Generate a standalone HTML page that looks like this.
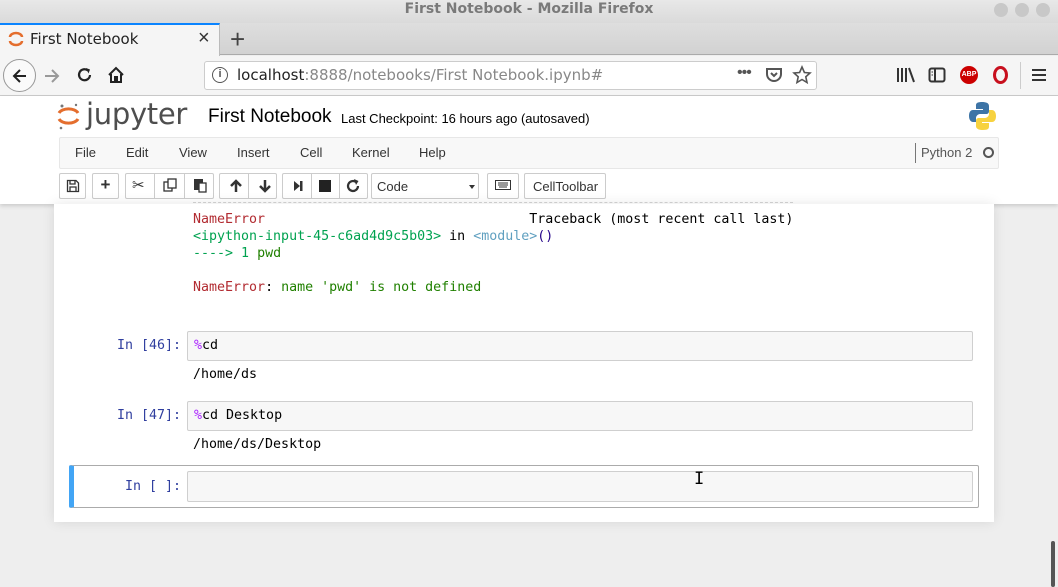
<!DOCTYPE html>
<html><head><style>
*{box-sizing:border-box;margin:0;padding:0}
body{width:1058px;height:587px;overflow:hidden;background:#eeeeee;font-family:"Liberation Sans",sans-serif;position:relative}
.abs{position:absolute}
.mono{font-family:"DejaVu Sans Mono",monospace;font-size:13.3px;white-space:pre}
.btn{position:absolute;top:173px;height:26px;background:#fff;border:1px solid #ccc;border-radius:2px}
.menu span{position:absolute;top:7px;font-size:13px;color:#333}
.ob{fill:none;stroke:#333;stroke-width:2}
</style></head><body>
<!-- title bar -->
<div class="abs" style="left:0;top:0;width:1058px;height:23px;background:linear-gradient(#e8e8e8,#dadada)"></div>
<div class="abs" style="left:0;top:1px;width:1058px;text-align:center;font-weight:bold;font-size:14px;color:#7a7a7a;font-family:'DejaVu Sans',sans-serif">First Notebook - Mozilla Firefox</div>
<div class="abs" style="left:994px;top:3px;width:14px;height:14px;border-radius:50%;background:#c8c8c8"></div>
<div class="abs" style="left:1015px;top:3px;width:14px;height:14px;border-radius:50%;background:#c8c8c8"></div>
<div class="abs" style="left:1036px;top:3px;width:14px;height:14px;border-radius:50%;background:#c8c8c8"></div>
<!-- tab bar -->
<div class="abs" style="left:0;top:23px;width:1058px;height:32px;background:linear-gradient(#dedede,#d2d2d2);border-bottom:1px solid #aaa"></div>
<div class="abs" style="left:0;top:23px;width:220px;height:33px;background:#f5f5f5;border-top:2px solid #0a84ff;border-right:1px solid #bbb"></div>
<svg class="abs" style="left:8px;top:31px" width="16" height="16"><path d="M2 6 A6 4 0 0 1 14 6" fill="none" stroke="#e46e2e" stroke-width="2.5"/><path d="M2 10 A6 4 0 0 0 14 10" fill="none" stroke="#e46e2e" stroke-width="2.5"/></svg>
<div class="abs" style="left:30px;top:30px;font-size:15px;color:#222;font-family:'DejaVu Sans',sans-serif">First Notebook</div>
<div class="abs" style="left:198px;top:27px;font-size:20px;color:#333">×</div>
<div class="abs" style="left:230px;top:24px;font-size:26px;color:#444;font-weight:300">+</div>
<!-- nav bar -->
<div class="abs" style="left:0;top:56px;width:1058px;height:40px;background:#f5f5f5;border-bottom:1px solid #ccc"></div>
<div class="abs" style="left:3px;top:59px;width:33px;height:33px;border-radius:50%;border:1px solid #999;background:#fafafa"></div>
<svg class="abs" style="left:10px;top:66px" width="20" height="20"><path d="M16 10H4M10 4L4 10L10 16" fill="none" stroke="#222" stroke-width="2"/></svg>
<svg class="abs" style="left:42px;top:66px" width="20" height="20"><path d="M3 10H16M10 4L16 10L10 16" fill="none" stroke="#999" stroke-width="2"/></svg>
<svg class="abs" style="left:75px;top:65px" width="20" height="20"><path d="M15 10A5.5 5.5 0 1 1 13 5.5" fill="none" stroke="#222" stroke-width="2.2"/><path d="M11 3L15 4.5L13.5 8.5" fill="#222"/></svg>
<svg class="abs" style="left:106px;top:65px" width="20" height="20"><path d="M3 10L10 3L17 10M5 9V17H9V12H11V17H15V9" fill="none" stroke="#222" stroke-width="2"/></svg>
<div class="abs" style="left:204px;top:61px;width:613px;height:29px;background:#fff;border:1px solid #ccc;border-radius:3px"></div>
<div class="abs" style="left:212px;top:67px;width:16px;height:16px;border:1.5px solid #555;border-radius:50%;font-size:11px;text-align:center;line-height:13px;color:#555;font-weight:bold">i</div>
<div class="abs" style="left:237px;top:66px;font-size:15px;color:#888;font-family:'DejaVu Sans',sans-serif"><span style="color:#222">localhost</span>:8888/notebooks/First Notebook.ipynb#</div>
<div class="abs" style="left:737px;top:64px;font-size:16px;color:#555;letter-spacing:-1px">•••</div>
<svg class="abs" style="left:764px;top:65px" width="20" height="20"><path d="M3 4H17V9A7 7 0 0 1 3 9Z" fill="none" stroke="#555" stroke-width="2"/><path d="M7 8L10 11L13 8" fill="none" stroke="#555" stroke-width="2"/></svg>
<svg class="abs" style="left:792px;top:65px" width="20" height="20"><path d="M10 2L12.4 7.5L18 8L13.8 11.8L15 17.5L10 14.5L5 17.5L6.2 11.8L2 8L7.6 7.5Z" fill="none" stroke="#555" stroke-width="1.6"/></svg>
<svg class="abs" style="left:896px;top:66px" width="20" height="18"><path d="M2 2V16M6 2V16M10 2V16M13 2L18 16" stroke="#333" stroke-width="2"/></svg>
<svg class="abs" style="left:928px;top:66px" width="18" height="18"><rect x="1.5" y="2.5" width="15" height="13" rx="2" class="ob"/><path d="M7 3V15" class="ob"/><path d="M3.5 6H5M3.5 9H5" stroke="#333"/></svg>
<div class="abs" style="left:960px;top:66px;width:18px;height:18px;border-radius:50%;background:#c00;color:#fff;font-size:7px;font-weight:bold;text-align:center;line-height:18px">ABP</div>
<div class="abs" style="left:993px;top:66px;width:15px;height:18px;border-radius:50%;border:3px solid #c8101e"></div>
<div class="abs" style="left:1020px;top:62px;width:1px;height:27px;background:#ccc"></div>
<svg class="abs" style="left:1031px;top:67px" width="16" height="16"><path d="M1 3H15M1 8H15M1 13H15" stroke="#333" stroke-width="2"/></svg>
<!-- jupyter header -->
<div class="abs" style="left:0;top:96px;width:1058px;height:108px;background:#fff;box-shadow:0 2px 4px rgba(0,0,0,.15)"></div>
<svg class="abs" style="left:57px;top:102px" width="24" height="28"><path d="M2 11 A10 6 0 0 1 21 11" fill="none" stroke="#e46e2e" stroke-width="3"/><path d="M2 17 A10 6 0 0 0 21 17" fill="none" stroke="#e46e2e" stroke-width="3"/><circle cx="5" cy="4" r="1.5" fill="#767677"/><circle cx="19" cy="3" r="1.2" fill="#767677"/><circle cx="4" cy="26" r="1.3" fill="#767677"/></svg>
<div class="abs" style="left:86px;top:97px;font-size:29px;color:#4e4e4e;font-family:'DejaVu Sans',sans-serif;letter-spacing:-0.3px">jupyter</div>
<div class="abs" style="left:208px;top:106px;font-size:19px;color:#000">First Notebook</div>
<div class="abs" style="left:341px;top:111px;font-size:13px;color:#000">Last Checkpoint: 16 hours ago (autosaved)</div>
<svg class="abs" style="left:968px;top:101px" width="30" height="30"><path d="M14 1C8 1 8 3 8 5V8H15V9H5C2 9 1 12 1 15C1 19 3 21 5 21H8V17C8 15 10 13 12 13H18C20 13 21 12 21 10V5C21 2 18 1 14 1Z" fill="#3d74a6"/><path d="M15 29C21 29 21 27 21 25V22H14V21H24C27 21 28 18 28 15C28 11 26 9 24 9H21V13C21 15 19 17 17 17H11C9 17 8 18 8 20V25C8 28 11 29 15 29Z" fill="#f7d23f"/></svg>
<!-- menu -->
<div class="abs menu" style="left:59px;top:137px;width:940px;height:32px;background:#f8f8f8;border:1px solid #e7e7e7;border-radius:2px">
<span style="left:15px">File</span><span style="left:66px">Edit</span><span style="left:119px">View</span><span style="left:177px">Insert</span><span style="left:240px">Cell</span><span style="left:292px">Kernel</span><span style="left:359px">Help</span>
<div class="abs" style="left:855px;top:5px;width:1px;height:20px;background:#777"></div>
<span style="left:861px;color:#555">Python 2</span>
<div class="abs" style="left:923px;top:9px;width:11px;height:11px;border:2px solid #555;border-radius:50%"></div>
</div>
<!-- toolbar -->
<div class="btn" style="left:59px;width:27px"></div>
<svg class="abs" style="left:66px;top:179px" width="14" height="14"><path d="M1.5 1.5H10L12.5 4V12.5H1.5Z M4 1.5V5H9V1.5 M4 12.5V8H10V12.5" fill="none" stroke="#333" stroke-width="1.3"/></svg>
<div class="btn" style="left:92px;width:27px;text-align:center;font-weight:bold;font-size:17px;line-height:22px;color:#333">+</div>
<div class="btn" style="left:125px;width:89px"></div>
<div class="abs" style="left:154px;top:173px;width:1px;height:26px;background:#ccc"></div>
<div class="abs" style="left:184px;top:173px;width:1px;height:26px;background:#ccc"></div>
<div class="abs" style="left:132px;top:176px;font-size:15px;color:#333">✂</div>
<svg class="abs" style="left:163px;top:178px" width="15" height="15"><rect x="1" y="4" width="8" height="9" fill="#fff" stroke="#333" stroke-width="1.3"/><rect x="5" y="1" width="8" height="9" fill="#fff" stroke="#333" stroke-width="1.3"/></svg>
<svg class="abs" style="left:193px;top:178px" width="15" height="15"><rect x="1" y="1" width="9" height="11" fill="#333"/><rect x="6" y="5" width="7" height="9" fill="#fff" stroke="#333" stroke-width="1.3"/></svg>
<div class="btn" style="left:219px;width:58px"></div>
<div class="abs" style="left:248px;top:173px;width:1px;height:26px;background:#ccc"></div>
<svg class="abs" style="left:229px;top:179px" width="14" height="14"><path d="M7 13V3M2 7L7 2L12 7" fill="none" stroke="#333" stroke-width="2.5"/></svg>
<svg class="abs" style="left:258px;top:179px" width="14" height="14"><path d="M7 1V11M2 7L7 12L12 7" fill="none" stroke="#333" stroke-width="2.5"/></svg>
<div class="btn" style="left:282px;width:86px"></div>
<div class="abs" style="left:311px;top:173px;width:1px;height:26px;background:#ccc"></div>
<div class="abs" style="left:339px;top:173px;width:1px;height:26px;background:#ccc"></div>
<svg class="abs" style="left:291px;top:179px" width="14" height="14"><path d="M3 2L9 7L3 12Z" fill="#333"/><rect x="9" y="2" width="2.5" height="10" fill="#333"/></svg>
<div class="abs" style="left:319px;top:180px;width:12px;height:12px;background:#222"></div>
<svg class="abs" style="left:346px;top:179px" width="14" height="14"><path d="M12 7A5 5 0 1 1 10 3" fill="none" stroke="#333" stroke-width="2.2"/><path d="M8 0L12.5 2L10 6Z" fill="#333"/></svg>
<div class="btn" style="left:371px;width:108px;font-size:13px;padding:5px 0 0 5px;color:#333">Code<div class="abs" style="right:3px;top:11px;border:3px solid transparent;border-top:4px solid #333"></div></div>
<div class="btn" style="left:487px;width:32px"></div>
<svg class="abs" style="left:495px;top:180px" width="16" height="10"><rect x="0.5" y="0.5" width="15" height="9" fill="none" stroke="#333"/><path d="M3 3H13M3 5H13M4 7H12" stroke="#333"/></svg>
<div class="btn" style="left:524px;width:82px;font-size:13px;padding:5px 0 0 8px;color:#333">CellToolbar</div>
<!-- notebook -->
<div class="abs" style="left:54px;top:204px;width:940px;height:318px;background:#fff;box-shadow:0 0 12px rgba(0,0,0,.1)"></div>
<div class="abs" style="left:193px;top:202px;width:600px;border-top:1px dashed #ccc"></div>
<div class="abs mono" style="left:193px;top:211px;line-height:17px"><span style="color:#b22b31">NameError</span>                                 Traceback (most recent call last)
<span style="color:#00a250">&lt;ipython-input-45-c6ad4d9c5b03&gt;</span> in <span style="color:#60a0c0">&lt;module&gt;</span><span style="color:#208">()</span>
<span style="color:#00a250">----&gt; 1</span> <span style="color:#208000">pwd</span>

<span style="color:#b22b31">NameError</span>: <span style="color:#208000">name 'pwd' is not defined</span></div>
<div class="abs mono" style="left:117px;top:338px;color:#303f9f">In [46]:</div>
<div class="abs" style="left:187px;top:331px;width:786px;height:30px;background:#f7f7f7;border:1px solid #cfcfcf;border-radius:2px"></div>
<div class="abs mono" style="left:194px;top:338px"><span style="color:#aa22ff">%</span>cd</div>
<div class="abs mono" style="left:193px;top:367px">/home/ds</div>
<div class="abs mono" style="left:117px;top:408px;color:#303f9f">In [47]:</div>
<div class="abs" style="left:187px;top:401px;width:786px;height:30px;background:#f7f7f7;border:1px solid #cfcfcf;border-radius:2px"></div>
<div class="abs mono" style="left:194px;top:408px"><span style="color:#aa22ff">%</span>cd Desktop</div>
<div class="abs mono" style="left:193px;top:437px">/home/ds/Desktop</div>
<div class="abs" style="left:69px;top:465px;width:910px;height:43px;border:1px solid #ababab;border-left:5px solid #42a5f5;border-radius:2px"></div>
<div class="abs mono" style="left:125px;top:479px;color:#303f9f">In [ ]:</div>
<div class="abs" style="left:187px;top:471px;width:786px;height:31px;background:#f7f7f7;border:1px solid #cfcfcf;border-radius:2px"></div>
<div class="abs" style="left:694px;top:469px;font-size:17px;color:#000;font-family:'DejaVu Sans Mono',monospace">I</div>
<div class="abs" style="left:1051px;top:541px;width:4px;height:46px;background:#555;border-radius:2px"></div>
</body></html>
